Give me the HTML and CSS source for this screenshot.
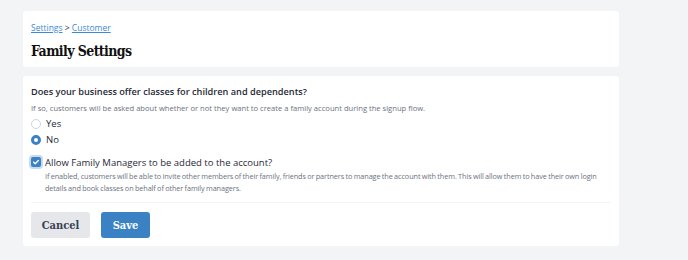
FILE: index.html
```html
<!DOCTYPE html>
<html lang="en">
<head>
    <meta charset="UTF-8">
    <title>Family Settings</title>
    <link rel="stylesheet" href="styles.css">
</head>
<body>
    <div class="page">
        <header class="card head-card">
            <nav class="breadcrumb">
                <a href="#">Settings</a> &gt; <a href="#">Customer</a>
            </nav>
            <h1>Family Settings</h1>
        </header>

        <section class="card form-card">
            <h2 class="question">Does your business offer classes for children and dependents?</h2>
            <p class="help">If so, customers will be asked about whether or not they want to create a family account during the signup flow.</p>

            <div class="radios">
                <label class="radio"><span class="dot"></span>Yes</label>
                <label class="radio checked"><span class="dot"></span>No</label>
            </div>

            <div class="check-row">
                <span class="box">
                    <svg width="8" height="8" viewBox="0 0 8 8"><path d="M1.6 4.2 L3.2 5.7 L6.4 2.4" fill="none" stroke="#fff" stroke-width="1.4" stroke-linecap="round" stroke-linejoin="round"/></svg>
                </span>
                <div class="check-text">
                    <div class="check-label">Allow Family Managers to be added to the account?</div>
                    <p class="help"><span class="line">If enabled, customers will be able to invite other members of their family, friends or partners to manage the account with them. This will allow them to have their own login</span> details and book classes on behalf of other family managers.</p>
                </div>
            </div>

            <div class="actions">
                <button class="btn cancel">Cancel</button>
                <button class="btn save">Save</button>
            </div>
        </section>
    </div>
</body>
</html>
```

FILE: styles.css
```css
body {
    margin: 0;
    background-color: #f3f4f6;
    font-family: "Open Sans", Arial, sans-serif;
    color: #1f2937;
}
.page {
    width: 596px;
    padding: 11px 0 0 23px;
    display: flex;
    flex-direction: column;
    gap: 9px;
}
.card {
    background-color: #fff;
    border-radius: 3px;
}
.head-card {
    height: 56px;
    box-sizing: border-box;
    padding: 10px 8px 0 8px;
}
.breadcrumb {
    font-size: 8.5px;
    line-height: 13px;
    color: #1f2937;
}
.breadcrumb a {
    color: #3d8bd6;
}
h1 {
    margin: 7px 0 0 0;
    font-family: "DejaVu Serif", serif;
    font-stretch: condensed;
    font-size: 14px;
    letter-spacing: -0.6px;
    line-height: 20px;
    font-weight: bold;
    color: #111;
}
.form-card {
    height: 170px;
    box-sizing: border-box;
    padding: 9px 8px 0 8px;
}
.question {
    margin: 0;
    font-size: 9.2px;
    font-weight: 600;
    line-height: 14px;
    color: #1f2937;
}
.help {
    margin: 3px 0 0 0;
    font-size: 7.6px;
    line-height: 12px;
    color: #6b7280;
}
.radios {
    display: flex;
    flex-direction: column;
    gap: 3px;
    margin-top: 3px;
}
.radio {
    display: flex;
    align-items: center;
    gap: 3px;
    font-size: 9.5px;
    line-height: 13px;
    color: #1f2937;
}
.dot {
    width: 10px;
    height: 10px;
    border: 1px solid #d1d5db;
    border-radius: 50%;
    box-sizing: border-box;
    margin-right: 2px;
}
.radio.checked .dot {
    border: 3px solid #3b82c4;
}
.check-row {
    display: flex;
    gap: 4px;
    margin-top: 10px;
    padding-bottom: 8px;
    border-bottom: 1px solid #f3f4f6;
}
.check-text .help {
    margin-top: 1px;
    font-size: 7.3px;
    letter-spacing: -0.1px;
    word-spacing: -0.4px;
}
.check-text .line {
    white-space: nowrap;
}
.box {
    width: 10px;
    height: 10px;
    margin-top: 1px;
    border-radius: 2px;
    background-color: #3b82c4;
    box-shadow: 0 0 0 2px #c7dbef;
    display: flex;
    align-items: center;
    justify-content: center;
    flex-shrink: 0;
}
.check-label {
    font-size: 9.5px;
    line-height: 13px;
}
.actions {
    display: flex;
    gap: 11px;
    margin-top: 9px;
}
.btn {
    height: 26px;
    border: none;
    border-radius: 3px;
    font-family: "DejaVu Serif", serif;
    font-stretch: condensed;
    font-weight: bold;
    font-size: 11px;
    cursor: pointer;
}
.cancel {
    width: 59px;
    background-color: #e5e7eb;
    color: #374151;
}
.save {
    width: 49px;
    background-color: #3b82c4;
    color: #fff;
}
```
